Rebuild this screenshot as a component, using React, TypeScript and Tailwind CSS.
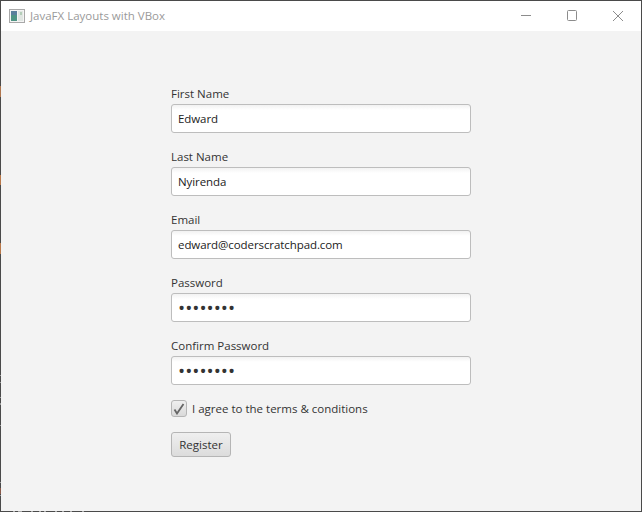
const fields = [
  { label: 'First Name', value: 'Edward', type: 'text' },
  { label: 'Last Name', value: 'Nyirenda', type: 'text' },
  { label: 'Email', value: 'edward@coderscratchpad.com', type: 'text' },
  { label: 'Password', value: 'password', type: 'password' },
  { label: 'Confirm Password', value: 'password', type: 'password' },
];

// bits of the desktop showing through the window edge
const edgeMarks = [
  { top: 86, height: 11, color: '#b0764e' },
  { top: 175, height: 10, color: '#b9784a' },
  { top: 243, height: 11, color: '#b9784a' },
  { top: 375, height: 1, color: '#999999' },
  { top: 382, height: 1, color: '#999999' },
  { top: 397, height: 1, color: '#999999' },
  { top: 403, height: 2, color: '#999999' },
  { top: 425, height: 1, color: '#999999' },
  { top: 482, height: 1, color: '#999999' },
  { top: 488, height: 6, color: '#8a5a4a' },
  { top: 495, height: 1, color: '#999999' },
];
const bottomMarks = [13, 18, 20, 31, 39, 44, 55, 62, 70, 82];

function AppIcon() {
  return (
    <svg width="16" height="14" viewBox="0 0 16 14" className="shrink-0">
      <rect x="0.5" y="0.5" width="15" height="13" fill="#f4f4f4" stroke="#a8a8a8" />
      <rect x="2" y="2" width="6" height="10" fill="#4f9484" />
      <rect x="2" y="2" width="6" height="4" fill="#5a7f9c" />
      <rect x="9" y="2" width="5" height="10" fill="#e0e6e2" />
      <rect x="11" y="3" width="2" height="3" fill="#b4cdb9" />
    </svg>
  );
}

function TitleBar() {
  return (
    <div className="flex h-[30px] items-center bg-white pl-2">
      <AppIcon />
      <span className="ml-[5px] text-[11.5px] text-[#9a9a9a]">JavaFX Layouts with VBox</span>
      <div className="ml-auto flex items-center text-[#8c8c8c]">
        <svg width="46" height="30" viewBox="0 0 46 30">
          <path d="M18 14.5h10" stroke="currentColor" fill="none" />
        </svg>
        <svg width="46" height="30" viewBox="0 0 46 30">
          <rect x="18.5" y="9.5" width="9" height="10" rx="1" stroke="currentColor" fill="none" />
        </svg>
        <svg width="46" height="30" viewBox="0 0 46 30">
          <path d="M18 10l10 10M28 10L18 20" stroke="currentColor" fill="none" />
        </svg>
      </div>
    </div>
  );
}

function Field({ label, value, type }: { label: string; value: string; type: string }) {
  return (
    <div className="flex flex-col">
      <label className="h-[18px] text-[11.5px] leading-[15px] text-[#333]">{label}</label>
      <input
        readOnly
        type={type}
        value={value}
        className={`h-[29px] w-[300px] rounded-[3px] border border-[#bdbdbd] bg-[linear-gradient(#f2f2f2,#ffffff_5px)] px-[6px] outline-none ${
          type === 'password' ? 'text-[19px] text-[#333]' : 'text-[11.5px] tracking-[-0.08px] text-[#222]'
        }`}
      />
    </div>
  );
}

export default function App() {
  return (
    <div
      className="relative flex h-[512px] w-[642px] flex-col border border-[#4a4a4a] bg-[#f3f3f3]"
      style={{ fontFamily: '"Open Sans", "Noto Sans", sans-serif' }}
    >
      <TitleBar />
      <div className="flex flex-col pl-[170px] pt-[55px]">
        <div className="flex flex-col gap-[16px]">
          {fields.map((f) => (
            <Field key={f.label} {...f} />
          ))}
        </div>
        <div className="mt-[15px] flex items-center gap-[5px]">
          <span className="flex h-[17px] w-[16px] items-center justify-center rounded-[3px] border border-[#b5b5b5] bg-[linear-gradient(#efefef,#d9d9d9)]">
            <svg width="12" height="12" viewBox="0 0 12 12">
              <path d="M1.5 6.5l2.5 4L10.5 1" stroke="#666" strokeWidth="1.8" fill="none" />
            </svg>
          </span>
          <span className="text-[11.5px] text-[#333]">I agree to the terms &amp; conditions</span>
        </div>
        <button className="mt-[15px] h-[25px] w-[60px] rounded-[3px] border border-[#b5b5b5] bg-[linear-gradient(#efefef,#dcdcdc)] text-[11.5px] text-[#333]">
          Register
        </button>
      </div>
      {edgeMarks.map((m) => (
        <span
          key={m.top}
          className="absolute left-[-1px] w-px"
          style={{ top: m.top - 1, height: m.height, backgroundColor: m.color }}
        />
      ))}
      {bottomMarks.map((x) => (
        <span
          key={x}
          className="absolute bottom-[-1px] h-px w-[2px] bg-[#a8a8a8]"
          style={{ left: x - 1 }}
        />
      ))}
    </div>
  );
}
